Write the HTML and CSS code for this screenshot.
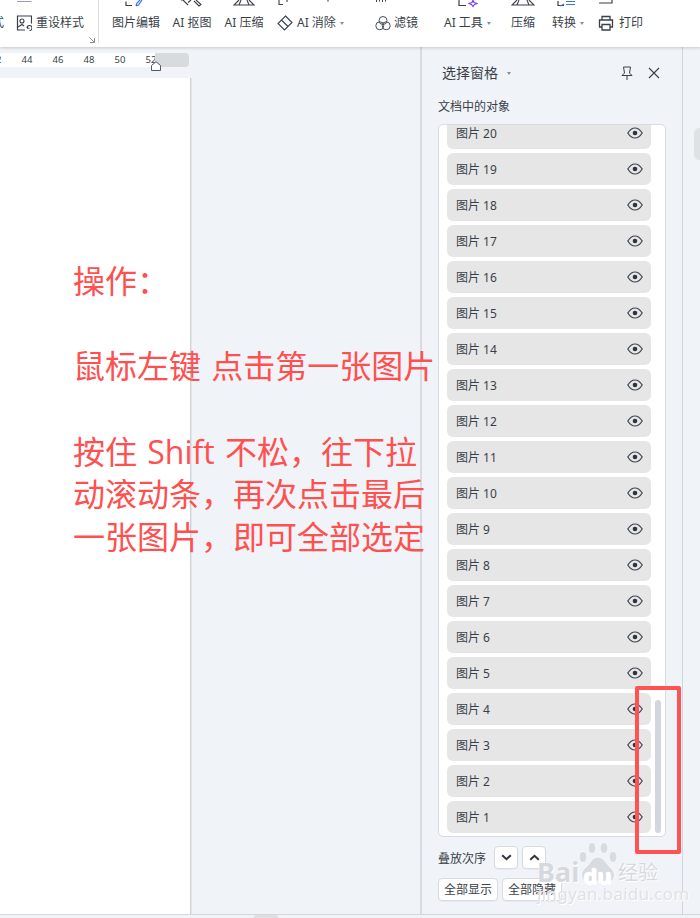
FILE: index.html
```html
<!DOCTYPE html>
<html lang="zh-CN">
<head>
<meta charset="utf-8">
<title>选择窗格</title>
<link rel="stylesheet" href="styles.css">
</head>
<body>
<div class="app">
  <header class="toolbar">
    <div class="group-left">
      <span class="label frag">式</span>
      <div class="tool-inline reset">
        <div class="top top-left"><svg width="16" height="15" viewBox="0 0 16 15"><path d="M1 1.500H15.500" fill="none" stroke="#9a9ea6" stroke-width="1"/></svg></div>
        <div class="inline-row">
          <svg class="ic" width="16" height="16" viewBox="0 0 16 16"><path d="M9 15H1.500V1H15.500V8.500" fill="none" stroke="#3a3f4a" stroke-width="1.200"/><circle cx="6" cy="6" r="2" fill="none" stroke="#3a3f4a" stroke-width="1.100"/><path d="M2 12L6 9.500 8 11M11 13a2.500 2.500 0 1 1 2.500 2.500M11.500 11v2.200h2" fill="none" stroke="#3a3f4a" stroke-width="1.100"/></svg>
          <span class="label">重设样式</span>
        </div>
      </div>
      <svg class="launcher" width="6" height="6" viewBox="0 0 6 6"><path d="M0.500 0.500L5 5M5.500 1V5.500H1" fill="none" stroke="#7a7e86" stroke-width="0.900"/></svg>
    </div>
    <div class="divider"></div>
    <div class="tool t-edit">
      <div class="top"><svg width="24" height="15" viewBox="0 0 24 15"><path d="M2 1.500V5.500H8" fill="none" stroke="#3a3f4a" stroke-width="1.200"/><path d="M12 6L13 3 16 0M18 0L14.500 5 12 6" fill="none" stroke="#3f6fe8" stroke-width="1.200"/></svg></div>
      <span class="label">图片编辑</span>
    </div>
    <div class="tool t-cut">
      <div class="top"><svg width="24" height="15" viewBox="0 0 24 15"><path d="M1 0H3L8 5M16 0L21 4.500 19 6 14 1M8 2.500L11 0" fill="none" stroke="#3a3f4a" stroke-width="1.100"/></svg></div>
      <span class="label">AI 抠图</span>
    </div>
    <div class="tool t-zip">
      <div class="top"><svg width="24" height="15" viewBox="0 0 24 15"><path d="M7 0L2 5H22L17 0M9 0L7 5M15 0L17 5" fill="none" stroke="#3a3f4a" stroke-width="1.100"/></svg></div>
      <span class="label">AI 压缩</span>
    </div>
    <div class="tool-inline t-erase">
      <div class="top top-left"><svg width="60" height="15" viewBox="0 0 60 15"><path d="M2 0V4.500H6M10 0V2M51 0V1.500" fill="none" stroke="#3a3f4a" stroke-width="1.100"/></svg></div>
      <div class="inline-row">
        <svg class="ic" width="16" height="16" viewBox="0 0 16 16"><path d="M8.500 1L15 7.500 7.500 15 1 8.500ZM4.500 5L11 11.500" fill="none" stroke="#3a3f4a" stroke-width="1.100"/></svg>
        <span class="label">AI 消除</span><span class="caret"></span>
      </div>
    </div>
    <div class="tool-inline t-filter">
      <div class="top top-left"><svg width="16" height="15" viewBox="0 0 16 15"><path d="M1.500 0V2M4.500 0V1.500M7.500 0V2M10.500 0V1.500" fill="none" stroke="#3a3f4a" stroke-width="1"/></svg></div>
      <div class="inline-row">
        <svg class="ic" width="16" height="16" viewBox="0 0 16 16"><circle cx="8" cy="5.500" r="4" fill="none" stroke="#4a4f5a" stroke-width="1"/><circle cx="4.800" cy="10.800" r="4" fill="none" stroke="#4a4f5a" stroke-width="1"/><circle cx="11.200" cy="10.800" r="4" fill="none" stroke="#4a4f5a" stroke-width="1"/></svg>
        <span class="label">滤镜</span>
      </div>
    </div>
    <div class="tool t-aitool">
      <div class="top"><svg width="50" height="15" viewBox="0 0 50 15"><path d="M15 0V5.500H22" fill="none" stroke="#3a3f4a" stroke-width="1.200"/><path d="M29 0L30 2.500 33 3.500 30.500 4.500 29 6.500 27.500 4.500 25 3.500 28 2.500Z" fill="none" stroke="#7a3ff0" stroke-width="1.100"/></svg></div>
      <div class="inline-row"><span class="label">AI 工具</span><span class="caret"></span></div>
    </div>
    <div class="tool t-zip2">
      <div class="top"><svg width="24" height="15" viewBox="0 0 24 15"><path d="M6 0L1 5H23L18 0M8 0L6 5M16 0L18 5" fill="none" stroke="#3a3f4a" stroke-width="1.100"/></svg></div>
      <span class="label">压缩</span>
    </div>
    <div class="tool t-conv">
      <div class="top"><svg width="34" height="15" viewBox="0 0 34 15"><path d="M6 1V5.500H12" fill="none" stroke="#3a3f4a" stroke-width="1.200"/><path d="M12 4L8.500 6M14 1.500H23M14 4.500H23" fill="none" stroke="#3f6fe8" stroke-width="1.200"/></svg></div>
      <div class="inline-row"><span class="label">转换</span><span class="caret"></span></div>
    </div>
    <div class="tool-inline t-print">
      <div class="top top-left"><svg width="16" height="15" viewBox="0 0 16 15"><path d="M1 3H14V0" fill="none" stroke="#3a3f4a" stroke-width="1.200"/></svg></div>
      <div class="inline-row">
        <svg class="ic" width="16" height="16" viewBox="0 0 16 16"><path d="M4 5V1.500H12V5M4 12H1.500V5H14.500V12H12M4 9.500H12V15H4Z" fill="none" stroke="#3a3f4a" stroke-width="1.300"/></svg>
        <span class="label">打印</span>
      </div>
    </div>
  </header>

  <main class="workspace">
    <section class="doc">
      <div class="ruler">
        <div class="ruler-white">
          <span class="tick tick-first">42</span>
          <span class="tick">44</span>
          <span class="tick">46</span>
          <span class="tick">48</span>
          <span class="tick">50</span>
          <span class="tick">52</span>
        </div>
        <div class="ruler-grey"></div>
        <svg class="marker" width="10" height="10" viewBox="0 0 10 10"><path d="M0.500 9.500V4.500L5 0.700 9.500 4.500V9.500Z" fill="#fff" stroke="#55585e" stroke-width="1"/></svg>
      </div>
      <div class="page"></div>
    </section>

    <aside class="panel">
      <div class="panel-head">
        <span class="panel-title">选择窗格</span><span class="caret caret-title"></span>
        <svg class="pin" width="14" height="14" viewBox="0 0 14 14"><path d="M3.500 1H10.500L9.500 7 12 9.500H2L4.500 7ZM7 9.500V14" fill="none" stroke="#3a3f4a" stroke-width="1"/></svg>
        <svg class="close" width="12" height="12" viewBox="0 0 12 12"><path d="M1 1L11 11M11 1L1 11" fill="none" stroke="#3a3f4a" stroke-width="1.100"/></svg>
      </div>
      <div class="panel-sub">文档中的对象</div>
      <div class="list">
        <div class="rows">
          <div class="row"><span>图片 20</span><svg class="eye"><use href="#eye"/></svg></div>
          <div class="row"><span>图片 19</span><svg class="eye"><use href="#eye"/></svg></div>
          <div class="row"><span>图片 18</span><svg class="eye"><use href="#eye"/></svg></div>
          <div class="row"><span>图片 17</span><svg class="eye"><use href="#eye"/></svg></div>
          <div class="row"><span>图片 16</span><svg class="eye"><use href="#eye"/></svg></div>
          <div class="row"><span>图片 15</span><svg class="eye"><use href="#eye"/></svg></div>
          <div class="row"><span>图片 14</span><svg class="eye"><use href="#eye"/></svg></div>
          <div class="row"><span>图片 13</span><svg class="eye"><use href="#eye"/></svg></div>
          <div class="row"><span>图片 12</span><svg class="eye"><use href="#eye"/></svg></div>
          <div class="row"><span>图片 11</span><svg class="eye"><use href="#eye"/></svg></div>
          <div class="row"><span>图片 10</span><svg class="eye"><use href="#eye"/></svg></div>
          <div class="row"><span>图片 9</span><svg class="eye"><use href="#eye"/></svg></div>
          <div class="row"><span>图片 8</span><svg class="eye"><use href="#eye"/></svg></div>
          <div class="row"><span>图片 7</span><svg class="eye"><use href="#eye"/></svg></div>
          <div class="row"><span>图片 6</span><svg class="eye"><use href="#eye"/></svg></div>
          <div class="row"><span>图片 5</span><svg class="eye"><use href="#eye"/></svg></div>
          <div class="row"><span>图片 4</span><svg class="eye"><use href="#eye"/></svg></div>
          <div class="row"><span>图片 3</span><svg class="eye"><use href="#eye"/></svg></div>
          <div class="row"><span>图片 2</span><svg class="eye"><use href="#eye"/></svg></div>
          <div class="row"><span>图片 1</span><svg class="eye"><use href="#eye"/></svg></div>
        </div>
        <div class="scroll-thumb"></div>
      </div>
      <div class="order">
        <span class="order-label">叠放次序</span>
        <button class="btn btn-icon"><svg width="11" height="7" viewBox="0 0 11 7"><path d="M1.200 1.200L5.500 5.200 9.800 1.200" fill="none" stroke="#2f3440" stroke-width="2"/></svg></button>
        <button class="btn btn-icon"><svg width="11" height="7" viewBox="0 0 11 7"><path d="M1.200 5.800L5.500 1.800 9.800 5.800" fill="none" stroke="#2f3440" stroke-width="2"/></svg></button>
      </div>
      <div class="actions">
        <button class="btn btn-text">全部显示</button>
        <button class="btn btn-text">全部隐藏</button>
      </div>
    </aside>

    <div class="strip"><div class="strip-thumb"></div></div>
  </main>

  <footer class="statusbar"><div class="status-bump"></div></footer>

  <div class="note">
    <p>操作：</p>
    <p>鼠标左键 点击第一张图片</p>
    <p>按住 Shift 不松，往下拉<br>动滚动条，再次点击最后<br>一张图片，即可全部选定</p>
  </div>

  <div class="redbox"></div>

  <div class="watermark">
    <svg class="paw" width="40" height="42" viewBox="0 0 40 42">
      <g fill="#d8dce1" stroke="#f8fafb" stroke-width="1">
        <ellipse cx="5" cy="15" rx="4" ry="5.500"/>
        <ellipse cx="14" cy="6" rx="4" ry="5.500"/>
        <ellipse cx="26" cy="6" rx="4" ry="5.500"/>
        <ellipse cx="35" cy="15" rx="4" ry="5.500"/>
        <path d="M20 15C26 15 28 22 33 26 39 31 37 41 29 40 24 39 16 39 11 40 3 41 1 31 7 26 12 22 14 15 20 15Z"/>
      </g>
    </svg>
    <span class="wm-bai">Bai</span>
    <span class="wm-du">du</span>
    <span class="wm-jy">经验</span>
    <span class="wm-url">jingyan.baidu.com</span>
  </div>
</div>

<svg class="defs" width="0" height="0">
  <symbol id="eye" viewBox="0 0 16 12">
    <path d="M0.800 6C3 2.500 5.300 1 8 1S13 2.500 15.200 6C13 9.500 10.700 11 8 11S3 9.500 0.800 6Z" fill="none" stroke="#3d4450" stroke-width="1.200"/>
    <circle cx="8" cy="6" r="2.300" fill="#2f3440"/>
  </symbol>
</svg>
</body>
</html>
```

FILE: styles.css
```css
* { box-sizing: border-box; }
html, body { margin: 0; padding: 0; }
body {
  width: 700px;
  height: 918px;
  overflow: hidden;
  font-family: "Noto Sans", "Noto Sans CJK SC", sans-serif;
  color: #3a3f4a;
}
.app {
  position: relative;
  width: 700px;
  height: 918px;
  display: flex;
  flex-direction: column;
  background: #f0f3f7;
  overflow: hidden;
}
.defs { position: absolute; }

/* toolbar */
.toolbar {
  height: 47px;
  flex: none;
  display: flex;
  align-items: flex-start;
  background: #fff;
  box-shadow: 0 1px 3px rgba(0, 0, 0, 0.18);
  position: relative;
  z-index: 2;
}
.label {
  font-size: 12px;
  line-height: 16px;
  white-space: nowrap;
  color: #3a3f4a;
}
.group-left {
  width: 98px;
  height: 43px;
  flex: none;
  display: flex;
  position: relative;
}
.frag { margin: 15px 0 0 -8px; width: 12px; }
.reset { margin-left: 12px; }
.launcher { position: absolute; left: 89px; top: 37px; }
.divider { width: 1px; height: 43px; background: #d9dce0; flex: none; }
.tool { display: flex; flex-direction: column; align-items: center; flex: none; }
.tool-inline { display: flex; flex-direction: column; align-items: flex-start; flex: none; }
.top { height: 15px; display: flex; justify-content: center; }
.top-left { justify-content: flex-start; }
.inline-row { display: flex; align-items: center; height: 16px; }
.ic { margin-right: 4px; flex: none; }
.caret {
  display: inline-block;
  width: 0;
  height: 0;
  margin-left: 4px;
  border-left: 2.500px solid transparent;
  border-right: 2.500px solid transparent;
  border-top: 3px solid #8a8e96;
}
.t-edit { width: 48px; margin-left: 13px; }
.t-cut { width: 40px; margin-left: 12px; }
.t-zip { width: 40px; margin-left: 12px; }
.t-erase { width: 72px; margin-left: 13px; }
.t-filter { width: 44px; margin-left: 26px; }
.t-filter .ic { margin-right: 3px; }
.t-aitool { width: 50px; margin-left: 25px; align-items: flex-start; }
.t-aitool .top { width: 50px; }
.t-zip2 { width: 24px; margin-left: 17px; }
.t-conv { width: 34px; margin-left: 17px; align-items: flex-start; }
.t-print { margin-left: 12px; }
.t-print .ic { margin-right: 5px; }

/* workspace */
.workspace { flex: 1; display: flex; min-height: 0; }
.doc { width: 420px; flex: none; display: flex; flex-direction: column; }
.ruler {
  position: relative;
  margin-top: 6px;
  width: 189px;
  height: 14px;
  flex: none;
  display: flex;
}
.ruler-white {
  width: 155px;
  background: #fff;
  display: flex;
  overflow: hidden;
}
.ruler-grey { flex: 1; background: #d8dbde; border-radius: 0 4px 4px 0; }
.tick {
  width: 31px;
  flex: none;
  text-align: center;
  font-size: 9.500px;
  line-height: 14px;
  color: #3a3f4a;
}
.tick-first { margin-left: -19.500px; }
.marker { position: absolute; left: 151px; top: 8px; }
.page {
  width: 191px;
  flex: 1;
  margin-top: 11px;
  background: #fff;
  border-right: 1px solid #cfd2d6;
  box-shadow: 1px 0 0 #e3e6ea;
}

/* panel */
.panel {
  width: 263px;
  flex: none;
  border-left: 2px solid #d8dbdf;
  border-right: 1px solid #d2d5d9;
  padding: 0 16px 0 16px;
  display: flex;
  flex-direction: column;
}
.panel-head {
  height: 14px;
  margin-top: 19px;
  padding-left: 4px;
  display: flex;
  align-items: center;
  position: relative;
}
.panel-title { font-size: 14px; line-height: 14px; color: #3a3f4a; }
.caret-title { margin-left: 9px; }
.pin { margin-left: auto; margin-right: 14px; }
.close { margin-right: 6px; }
.panel-sub { font-size: 12px; line-height: 16px; margin-top: 19px; color: #3a3f4a; }
.list {
  position: relative;
  margin-top: 9px;
  width: 228px;
  height: 713px;
  flex: none;
  background: #fff;
  border: 1px solid #d8dbdf;
  border-radius: 5px;
  overflow: hidden;
}
.rows {
  height: 100%;
  padding: 0 14px 3px 8px;
  display: flex;
  flex-direction: column;
  justify-content: flex-end;
  gap: 4px;
}
.row {
  height: 32px;
  flex: none;
  display: flex;
  align-items: center;
  justify-content: space-between;
  padding: 2px 8px 0 9px;
  background: #e6e6e6;
  border-radius: 6px;
  font-size: 12px;
  color: #3a3f4a;
}
.row span { line-height: 16px; }
.eye { width: 16px; height: 12px; margin-bottom: 2px; }
.scroll-thumb {
  position: absolute;
  right: 4px;
  bottom: 3px;
  width: 6px;
  height: 133px;
  background: #d3d6de;
  border-radius: 3px;
}
.order { display: flex; align-items: center; margin-top: 9px; height: 23px; }
.order-label { font-size: 12px; width: 56px; color: #3a3f4a; }
.btn {
  background: #fff;
  border: 1px solid #d8dbdf;
  border-radius: 4px;
  padding: 0;
  margin: 0;
  font-family: inherit;
  color: #3a3f4a;
  box-shadow: 0 1px 1px rgba(0, 0, 0, 0.04);
}
.btn-icon {
  width: 24px;
  height: 23px;
  margin-right: 4px;
  display: flex;
  align-items: center;
  justify-content: center;
}
.actions { display: flex; gap: 4px; margin-top: 9px; }
.btn-text { width: 60px; height: 23px; font-size: 12px; line-height: 20px; }

.strip { flex: 1; position: relative; }
.strip-thumb {
  margin: 81px 0 0 11px;
  height: 32px;
  background: #dfe2e5;
  border-radius: 5px 0 0 5px;
}

/* status bar */
.statusbar {
  height: 4px;
  flex: none;
  border-top: 1px solid #d4d7da;
  background: #f0f3f7;
  display: flex;
  padding-left: 254px;
}
.status-bump { width: 24px; height: 3px; background: #dddfe2; border-radius: 2px 2px 0 0; }

/* overlays */
.note {
  position: absolute;
  left: 73px;
  top: 260px;
  width: 370px;
  font-family: "Open Sans", "Noto Sans CJK SC", sans-serif;
  font-size: 32px;
  line-height: 42.700px;
  word-spacing: 2px;
  color: #ff5050;
  white-space: nowrap;
}
.note p { margin: 0 0 42.700px; }
.redbox {
  position: absolute;
  left: 635px;
  top: 686px;
  width: 46px;
  height: 168px;
  border: 4px solid #ff5252;
  border-radius: 2px;
}
.watermark {
  position: absolute;
  left: 536px;
  top: 840px;
  width: 128px;
  height: 66px;
  color: #d5d9de;
  pointer-events: none;
}
.watermark span {
  position: absolute;
  white-space: nowrap;
  text-shadow: 0 0 1px #fff, 1px 1px 0 #fff;
}
.paw { position: absolute; left: 42px; top: 2px; }
.wm-bai { left: 1px; top: 17px; font-size: 27px; line-height: 30px; font-weight: 700; }
.wm-du { left: 47px; top: 22px; font-size: 22px; line-height: 26px; font-weight: 700; color: #fff; }
.wm-jy { left: 82px; top: 21px; font-size: 20px; line-height: 24px; }
.wm-url { left: 1px; top: 44px; font-size: 17px; line-height: 20px; letter-spacing: 0.300px; color: #dde1e5; }
```
